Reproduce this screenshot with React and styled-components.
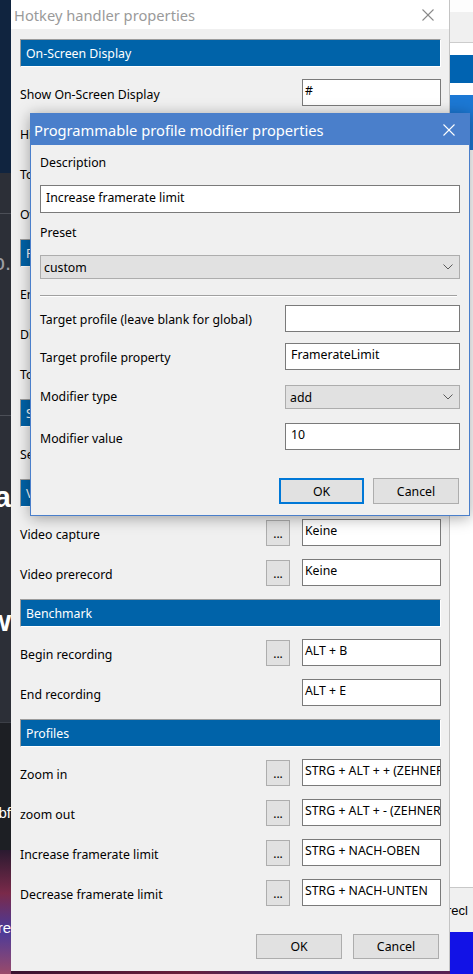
import React from "react";
import styled, { createGlobalStyle } from "styled-components";

const GlobalStyle = createGlobalStyle`
  html, body {
    margin: 0;
    padding: 0;
  }
  body {
    background: #1b1d22;
    font-family: "Noto Sans", "Liberation Sans", sans-serif;
  }
`;

const Desktop = styled.div`
  position: relative;
  width: 473px;
  height: 974px;
  overflow: hidden;
  display: grid;
  grid-template-columns: 11px 439px 23px;
`;

const Strip = styled.div`
  display: flex;
  flex-direction: column;
  overflow: hidden;
`;

const Band = styled.div`
  flex: none;
  height: ${(p) => p.$h}px;
  box-sizing: border-box;
  padding-top: ${(p) => p.$pt || 0}px;
  background: ${(p) => p.$bg};
  color: ${(p) => p.$color || "#fff"};
  font-family: "Liberation Sans", Arial, sans-serif;
  font-size: ${(p) => p.$size || 14}px;
  font-weight: ${(p) => p.$weight || 400};
  line-height: 1;
  display: flex;
  justify-content: ${(p) => (p.$start ? "flex-start" : "flex-end")};
  align-items: flex-start;
  white-space: nowrap;
  overflow: hidden;
`;

const Middle = styled.div`
  display: flex;
  flex-direction: column;
  background: linear-gradient(90deg, #3a1230, #6a1f3a 40%, #2a2c7a 70%, #5a2050);
`;

const Window = styled.div`
  height: 971px;
  flex: none;
  box-sizing: border-box;
  background: #f0f0f0;
  border-right: 1px solid #c4c4c4;
  display: flex;
  flex-direction: column;
`;

const TitleBar = styled.div`
  flex: none;
  height: ${(p) => (p.$active ? 31 : 29)}px;
  box-sizing: border-box;
  padding: 0 ${(p) => (p.$active ? 14 : 15)}px 0 3px;
  background: ${(p) => (p.$active ? "#4a7fcb" : "#ffffff")};
  color: ${(p) => (p.$active ? "#ffffff" : "#9a9a9a")};
  font-size: 14.7px;
  display: flex;
  align-items: center;
  justify-content: space-between;
`;

const Content = styled.div`
  padding: 10px 8px 0 9px;
  display: flex;
  flex-direction: column;
  gap: 13px;
`;

const Section = styled.div`
  display: flex;
  flex-direction: column;
  gap: 13px;
`;

const SectionHeader = styled.div`
  height: 28px;
  box-sizing: border-box;
  margin-bottom: -1px;
  padding-left: 5px;
  background: #0063a9;
  border: 1px solid;
  border-color: #9c9c9c #ffffff #ffffff #9c9c9c;
  color: #ffffff;
  font-size: 12.3px;
  display: flex;
  align-items: center;
`;

const Row = styled.div`
  height: 27px;
  display: flex;
  align-items: center;
`;

const RowLabel = styled.div`
  flex: 1;
  font-size: 12.3px;
  line-height: 16px;
  padding-top: 4px;
  color: #000;
  white-space: nowrap;
`;

const DotsButton = styled.div`
  width: 24px;
  height: 26px;
  box-sizing: border-box;
  margin-right: 12px;
  background: #e1e1e1;
  border: 1px solid #adadad;
  font-size: 12px;
  line-height: 16px;
  text-align: center;
  padding-top: 5px;
  color: #000;
`;

const KeyField = styled.div`
  width: ${(p) => p.$w || 139}px;
  height: 27px;
  box-sizing: border-box;
  padding: 3px ${(p) => p.$px || 2}px;
  background: #ffffff;
  border: 1px solid #7a7a7a;
  font-size: 12.3px;
  line-height: 16px;
  color: #000;
  white-space: nowrap;
  overflow: hidden;
`;

const Footer = styled.div`
  margin-top: ${(p) => p.$mt}px;
  padding-right: ${(p) => p.$pr}px;
  display: flex;
  justify-content: flex-end;
  gap: ${(p) => p.$gap}px;
`;

const PushButton = styled.div`
  width: ${(p) => p.$w || 86}px;
  height: ${(p) => p.$h || 25}px;
  box-sizing: border-box;
  background: #e1e1e1;
  border: ${(p) => (p.$focused ? "2px solid #0078d7" : "1px solid #adadad")};
  font-size: 12.3px;
  color: #000;
  display: flex;
  align-items: center;
  justify-content: center;
`;

const Modal = styled.div`
  position: absolute;
  left: 30px;
  top: 113px;
  width: 440px;
  height: 403px;
  box-sizing: border-box;
  background: #f0f0f0;
  border: 1px solid #4a7fcb;
  box-shadow: 0 2px 14px rgba(0, 0, 0, 0.35);
  display: flex;
  flex-direction: column;
`;

const ModalBody = styled.div`
  padding: 0 9px;
  display: flex;
  flex-direction: column;
`;

const FieldLabel = styled.div`
  margin-top: ${(p) => p.$mt}px;
  font-size: 12.3px;
  line-height: 16px;
  color: #000;
`;

const TextField = styled(KeyField)`
  width: auto;
  margin-top: ${(p) => p.$mt || 0}px;
  height: ${(p) => p.$h || 27}px;
  padding: 4px 5px;
`;

const Combo = styled.div`
  width: ${(p) => (p.$w ? `${p.$w}px` : "auto")};
  height: 24px;
  box-sizing: border-box;
  margin-top: ${(p) => p.$mt || 0}px;
  padding: 0 6px 0 ${(p) => p.$pl || 3}px;
  background: #e1e1e1;
  border: 1px solid #adadad;
  font-size: 12.3px;
  color: #000;
  display: flex;
  align-items: center;
  justify-content: space-between;
`;

const Separator = styled.div`
  margin-top: 16px;
  margin-right: 3px;
  height: 0;
  border-top: 1px solid #a0a0a0;
  border-bottom: 1px solid #ffffff;
`;

const FormRow = styled.div`
  margin-top: ${(p) => p.$mt}px;
  display: flex;
  align-items: center;
`;

const FormLabel = styled.div`
  flex: 1;
  font-size: 12.3px;
  line-height: 16px;
  padding-top: ${(p) => p.$pt ?? 2}px;
  color: #000;
`;

const Chevron = () => (
  <svg width="10" height="6" viewBox="0 0 10 6">
    <polyline points="0.5,0.5 5,5 9.5,0.5" fill="none" stroke="#5a5a5a" strokeWidth="1" />
  </svg>
);

const CloseIcon = ({ color }) => (
  <svg width="12" height="12" viewBox="0 0 12 12">
    <line x1="0.5" y1="0.5" x2="11.5" y2="11.5" stroke={color} strokeWidth="1.1" />
    <line x1="11.5" y1="0.5" x2="0.5" y2="11.5" stroke={color} strokeWidth="1.1" />
  </svg>
);

const sections = [
  {
    title: "On-Screen Display",
    rows: [
      { label: "Show On-Screen Display", value: "#" },
      { label: "Hide On-Screen Display", value: "", dots: true },
      { label: "Toggle On-Screen Display", value: "", dots: true },
      { label: "Overlay editor", value: "", dots: true },
    ],
  },
  {
    title: "Framerate limiter",
    rows: [
      { label: "Enable framerate limiter", value: "", dots: true },
      { label: "Disable framerate limiter", value: "", dots: true },
      { label: "Toggle framerate limiter", value: "", dots: true },
    ],
  },
  {
    title: "Screen capture",
    rows: [{ label: "Select screen capture", value: "", dots: true }],
  },
  {
    title: "Video capture",
    rows: [
      { label: "Video capture", value: "Keine", dots: true },
      { label: "Video prerecord", value: "Keine", dots: true },
    ],
  },
  {
    title: "Benchmark",
    rows: [
      { label: "Begin recording", value: "ALT + B", dots: true },
      { label: "End recording", value: "ALT + E" },
    ],
  },
  {
    title: "Profiles",
    rows: [
      { label: "Zoom in", value: "STRG + ALT + + (ZEHNERTASTATUR)", dots: true },
      { label: "zoom out", value: "STRG + ALT + - (ZEHNERTASTATUR)", dots: true },
      { label: "Increase framerate limit", value: "STRG + NACH-OBEN", dots: true },
      { label: "Decrease framerate limit", value: "STRG + NACH-UNTEN", dots: true },
    ],
  },
];

export default function App() {
  return (
    <>
      <GlobalStyle />
      <Desktop>
        <Strip>
          <Band $h={173} $bg="#10243f" />
          <Band $h={40} $bg="#2c2f37" />
          <Band $h={1} $bg="#4c4f57" />
          <Band $h={201} $bg="#2c2f37" $pt={38} $size={22} $color="#9c9ea3">
            Lo.
          </Band>
          <Band $h={1} $bg="#4c4f57" />
          <Band $h={160} $bg="#2c2f37" $pt={66} $size={30} $weight={700}>
            a
          </Band>
          <Band $h={146} $bg="#2c2f37" $pt={30} $size={30} $weight={700}>
            w
          </Band>
          <Band $h={1} $bg="#3c3f47" />
          <Band $h={127} $bg="#1d1f24" $pt={82} $size={15}>
            bf
          </Band>
          <Band
            $h={124}
            $bg="linear-gradient(180deg, #2a1a30 0%, #7a2a4a 35%, #4a3a9a 65%, #9a4a6a 100%)"
            $pt={70}
            $size={15}
          >
            re
          </Band>
        </Strip>

        <Middle>
          <Window>
            <TitleBar>
              <span>Hotkey handler properties</span>
              <CloseIcon color="#8a8a8a" />
            </TitleBar>
            <Content>
              {sections.map((s) => (
                <Section key={s.title}>
                  <SectionHeader>{s.title}</SectionHeader>
                  {s.rows.map((r) => (
                    <Row key={r.label}>
                      <RowLabel>{r.label}</RowLabel>
                      {r.dots && <DotsButton>...</DotsButton>}
                      <KeyField>{r.value}</KeyField>
                    </Row>
                  ))}
                </Section>
              ))}
            </Content>
            <Footer $mt={28} $pr={10} $gap={11}>
              <PushButton>OK</PushButton>
              <PushButton>Cancel</PushButton>
            </Footer>
          </Window>
        </Middle>

        <Strip>
          <Band $h={12} $bg="#fdfdfd" />
          <Band $h={30} $bg="#f0f0f0" />
          <Band $h={1} $bg="#cccccc" />
          <Band $h={12} $bg="#ffffff" />
          <Band $h={28} $bg="#0063b1" />
          <Band $h={12} $bg="#ffffff" />
          <Band $h={55} $bg="#1c78d4" />
          <Band $h={737} $bg="#ffffff" />
          <Band $h={1} $bg="#c8c8c8" />
          <Band $h={44} $bg="#f0f0f0" $pt={16} $size={13} $color="#000" $start>
            <span style={{ marginLeft: -3 }}>recl</span>
          </Band>
          <Band $h={42} $bg="#1212e6" />
        </Strip>

        <Modal>
          <TitleBar $active>
            <span>Programmable profile modifier properties</span>
            <CloseIcon color="#ffffff" />
          </TitleBar>
          <ModalBody>
            <FieldLabel $mt={10}>Description</FieldLabel>
            <TextField $mt={14} $h={28}>
              Increase framerate limit
            </TextField>
            <FieldLabel $mt={12}>Preset</FieldLabel>
            <Combo $mt={14}>
              <span>custom</span>
              <Chevron />
            </Combo>
            <Separator />
            <FormRow $mt={8}>
              <FormLabel>Target profile (leave blank for global)</FormLabel>
              <KeyField $w={175} $px={5} />
            </FormRow>
            <FormRow $mt={11}>
              <FormLabel>Target profile property</FormLabel>
              <KeyField $w={175} $px={5}>
                FramerateLimit
              </KeyField>
            </FormRow>
            <FormRow $mt={15}>
              <FormLabel $pt={0}>Modifier type</FormLabel>
              <Combo $w={175} $pl={4}>
                <span>add</span>
                <Chevron />
              </Combo>
            </FormRow>
            <FormRow $mt={14}>
              <FormLabel $pt={4}>Modifier value</FormLabel>
              <KeyField $w={175} $px={5}>
                10
              </KeyField>
            </FormRow>
            <Footer $mt={28} $pr={1} $gap={9}>
              <PushButton $w={85} $h={26} $focused>
                OK
              </PushButton>
              <PushButton $w={86} $h={26}>
                Cancel
              </PushButton>
            </Footer>
          </ModalBody>
        </Modal>
      </Desktop>
    </>
  );
}
